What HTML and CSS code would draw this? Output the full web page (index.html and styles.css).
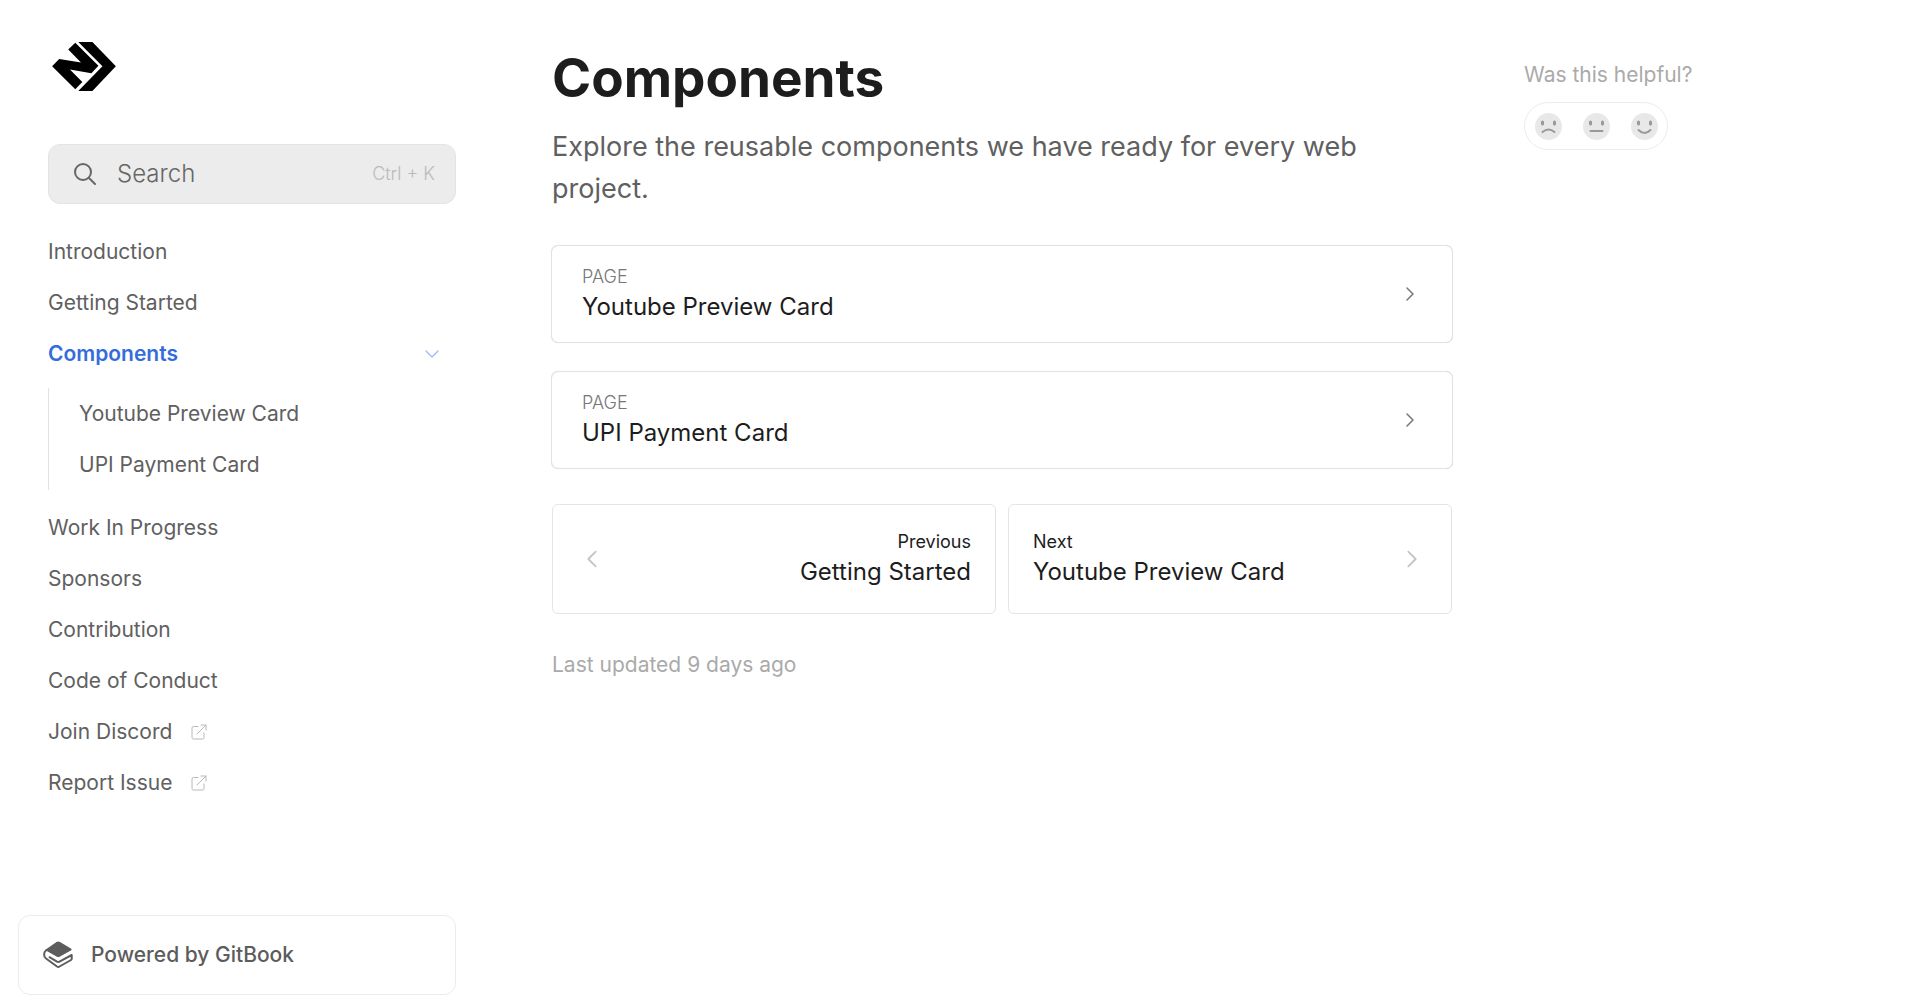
FILE: index.html
```html
<!DOCTYPE html>
<html lang="en">
<head>
<meta charset="utf-8">
<meta name="viewport" content="width=device-width, initial-scale=1">
<title>Components</title>
<link rel="stylesheet" href="styles.css">
</head>
<body>
<svg class="sprite" aria-hidden="true">
  <symbol id="chevron" viewBox="0 0 24 24"><path d="M8 4l8 8-8 8" fill="none" stroke="currentColor" stroke-width="2" stroke-linecap="round" stroke-linejoin="round"/></symbol>
  <symbol id="external" viewBox="0 0 16 16"><path d="M7 2.500H2.500a1.500 1.500 0 0 0-1.500 1.500V13.500a1.500 1.500 0 0 0 1.500 1.500H11.500a1.500 1.500 0 0 0 1.500-1.500V9M6 10L15 1M10 1h5v5" fill="none" stroke="currentColor" stroke-linecap="round" stroke-linejoin="round"/></symbol>
</svg>
<div class="layout">
  <aside class="sidebar">
    <a class="logo" href="#" aria-label="Home">
      <svg viewBox="67 65 190 146" aria-hidden="true"><path d="M145 65H187L257 137L187 211H145L217 137ZM115 87L136 67L205 136L184 158L120 147L157 184L136 206L67 137L88 116L153 126Z"/></svg>
    </a>
    <button class="search" type="button">
      <svg viewBox="0 0 22 22" aria-hidden="true"><circle cx="9" cy="9" r="8" /><path d="M15 15l6 6"/></svg>
      <span class="search-label">Search</span>
      <span class="search-keys">Ctrl + K</span>
    </button>
    <nav class="nav" aria-label="Pages">
      <ul>
        <li><a href="#">Introduction</a></li>
        <li><a href="#">Getting Started</a></li>
        <li>
          <a class="active" href="#" aria-current="page">Components <svg class="toggle" aria-hidden="true"><use href="#chevron"/></svg></a>
          <ul class="subnav">
            <li><a href="#">Youtube Preview Card</a></li>
            <li><a href="#">UPI Payment Card</a></li>
          </ul>
        </li>
        <li><a href="#">Work In Progress</a></li>
        <li><a href="#">Sponsors</a></li>
        <li><a href="#">Contribution</a></li>
        <li><a href="#">Code of Conduct</a></li>
        <li><a href="#">Join Discord <svg class="external" aria-hidden="true"><use href="#external"/></svg></a></li>
        <li><a href="#">Report Issue <svg class="external" aria-hidden="true"><use href="#external"/></svg></a></li>
      </ul>
    </nav>
    <a class="powered" href="#">
      <svg viewBox="0 0 31 28" aria-hidden="true"><path class="cover" d="M13.500 1Q15.300 0 17 1L28.300 7.800Q29 8.500 28.300 9.200L17 15.500Q15.300 16.500 13.500 15.500L2 9Z"/><path class="pages" d="M3 9.500C.5 11 .5 16 3 17.500L14 25.500Q15.300 26.300 16.500 25.500L28 19Q28.700 18.600 28.700 18V14L16.500 20.700Q15.300 21.400 14 20.700L6.500 16.200"/></svg>
      Powered by GitBook
    </a>
  </aside>
  <main class="content">
    <h1>Components</h1>
    <p class="lead">Explore the reusable components we have ready for every web project.</p>
    <div class="cards">
      <a class="card" href="#"><span class="text"><span class="kind">PAGE</span><span class="title">Youtube Preview Card</span></span><svg class="arrow" aria-hidden="true"><use href="#chevron"/></svg></a>
      <a class="card" href="#"><span class="text"><span class="kind">PAGE</span><span class="title">UPI Payment Card</span></span><svg class="arrow" aria-hidden="true"><use href="#chevron"/></svg></a>
    </div>
    <nav class="pager" aria-label="Previous and next page">
      <a class="page prev" href="#"><svg class="arrow" aria-hidden="true"><use href="#chevron"/></svg><span class="text"><span class="step">Previous</span><span class="title">Getting Started</span></span></a>
      <a class="page" href="#"><span class="text"><span class="step">Next</span><span class="title">Youtube Preview Card</span></span><svg class="arrow" aria-hidden="true"><use href="#chevron"/></svg></a>
    </nav>
    <p class="updated">Last updated 9 days ago</p>
  </main>
  <aside class="feedback">
    <p>Was this helpful?</p>
    <div class="faces">
      <button type="button" aria-label="Not helpful"><svg viewBox="0 0 27 27"><circle cx="13.500" cy="13.500" r="13.500"/><path class="eyes" d="M7.500 9v2M19.500 9v2"/><path class="mouth" d="M7.500 19Q13.500 14 19.500 19"/></svg></button>
      <button type="button" aria-label="Neutral"><svg viewBox="0 0 27 27"><circle cx="13.500" cy="13.500" r="13.500"/><path class="eyes" d="M7.500 9v2M19.500 9v2"/><path class="mouth" d="M7.500 18H19.500"/></svg></button>
      <button type="button" aria-label="Helpful"><svg viewBox="0 0 27 27"><circle cx="13.500" cy="13.500" r="13.500"/><path class="eyes" d="M7.500 9v2M19.500 9v2"/><path class="mouth" d="M7.500 17Q13.500 23 19.500 17"/></svg></button>
    </div>
  </aside>
</div>
</body>
</html>
```
FILE: styles.css
```css
* { box-sizing: border-box; }
body {
  margin: 0;
  background: #fff;
  color: #1d1d1d;
  font-family: Inter, sans-serif;
  font-size: 21px;
  line-height: 30px;
}
h1, p, ul { margin: 0; padding: 0; }
ul { list-style: none; }
a { color: inherit; text-decoration: none; }
button { font: inherit; cursor: pointer; }
svg { display: block; flex: none; }
.sprite { position: absolute; width: 0; height: 0; }

.layout {
  display: grid;
  grid-template-columns: 408px minmax(0, 900px) minmax(0, 1fr);
  min-height: 100vh;
  padding: 0 48px;
}

.sidebar {
  display: flex;
  flex-direction: column;
  padding: 42px 0 12px;
}
.logo { align-self: flex-start; margin: 0 0 53px 4px; }
.logo svg { width: 64px; height: 49px; }

.search {
  display: flex;
  align-items: center;
  gap: 21px;
  height: 60px;
  padding: 0 20px 0 25px;
  border: 1px solid #e4e4e4;
  border-radius: 12px;
  background: #ececec;
  color: #666;
}
.search svg { width: 22px; height: 22px; fill: none; stroke: currentColor; stroke-width: 2; stroke-linecap: round; }
.search-label { flex: 1; text-align: left; font-size: 24px; font-weight: 300; }
.search-keys { color: #bbb; font-size: 18px; font-weight: 300; }

.nav { padding-top: 22px; color: #606060; }
.nav a { display: flex; align-items: center; gap: 19px; height: 51px; }
.nav .active { justify-content: space-between; padding-right: 15px; color: #346ddb; font-weight: 600; }
.toggle { width: 18px; height: 18px; color: #a8c0f0; transform: rotate(90deg); }
.external { width: 16px; height: 16px; color: #b8b8b8; }
.subnav { margin: 9px 0 12px; padding-left: 30px; border-left: 1px solid #e2e2e2; }

.powered {
  display: flex;
  align-items: center;
  gap: 17px;
  height: 80px;
  margin: auto 0 0 -30px;
  padding: 0 24px;
  border: 1px solid #ececec;
  border-radius: 12px;
  color: #5c5c5c;
  font-weight: 500;
}
.powered svg { width: 31px; height: 28px; }
.cover { fill: currentColor; }
.pages { fill: none; stroke: currentColor; stroke-width: 2; stroke-linecap: round; stroke-linejoin: round; }

.content { margin-left: 96px; margin-right: -96px; padding-top: 44px; }
h1 { font-size: 53px; line-height: 68px; font-weight: 700; }
.lead { margin-top: 14px; padding-right: 24px; color: #606060; font-size: 27px; line-height: 42px; }
.cards { display: grid; gap: 30px; margin-top: 36px; }
.card, .page { display: flex; align-items: center; justify-content: space-between; }
.card {
  height: 96px;
  padding: 0 33px 0 30px;
  border-radius: 6px;
  box-shadow: 0 0 0 1px #e3e3e3, 0 0 1px 1px #e3e3e3;
}
.text { display: grid; padding-bottom: 3px; }
.kind, .step { font-size: 18px; line-height: 28px; }
.kind { color: #777; font-weight: 300; }
.title { font-size: 24px; line-height: 32px; }
.arrow { width: 18px; height: 18px; color: #777; }
.pager { display: grid; grid-template-columns: 1fr 1fr; gap: 12px; margin-top: 36px; }
.page {
  height: 110px;
  padding: 0 24px;
  border: 1px solid #e4e4e4;
  border-radius: 6px;
}
.page .arrow { width: 22px; height: 22px; margin: 0 4px; color: #c4c4c4; }
.prev { text-align: right; }
.prev .arrow { transform: rotate(180deg); }
.updated { margin-top: 36px; color: #aaa; }

.feedback { margin-left: 168px; padding-top: 60px; color: #aaa; }
.faces {
  display: flex;
  align-items: center;
  gap: 21px;
  width: 144px;
  height: 48px;
  margin-top: 12px;
  padding-left: 10px;
  border: 1px solid #ececec;
  border-radius: 24px;
}
.faces button { padding: 0; border: 0; background: none; }
.faces svg { width: 27px; height: 27px; }
.faces circle { fill: #e8e8e8; }
.faces path { fill: none; stroke: #999; stroke-linecap: round; }
.faces .eyes { stroke-width: 3; }
.faces .mouth { stroke-width: 2; }
```
